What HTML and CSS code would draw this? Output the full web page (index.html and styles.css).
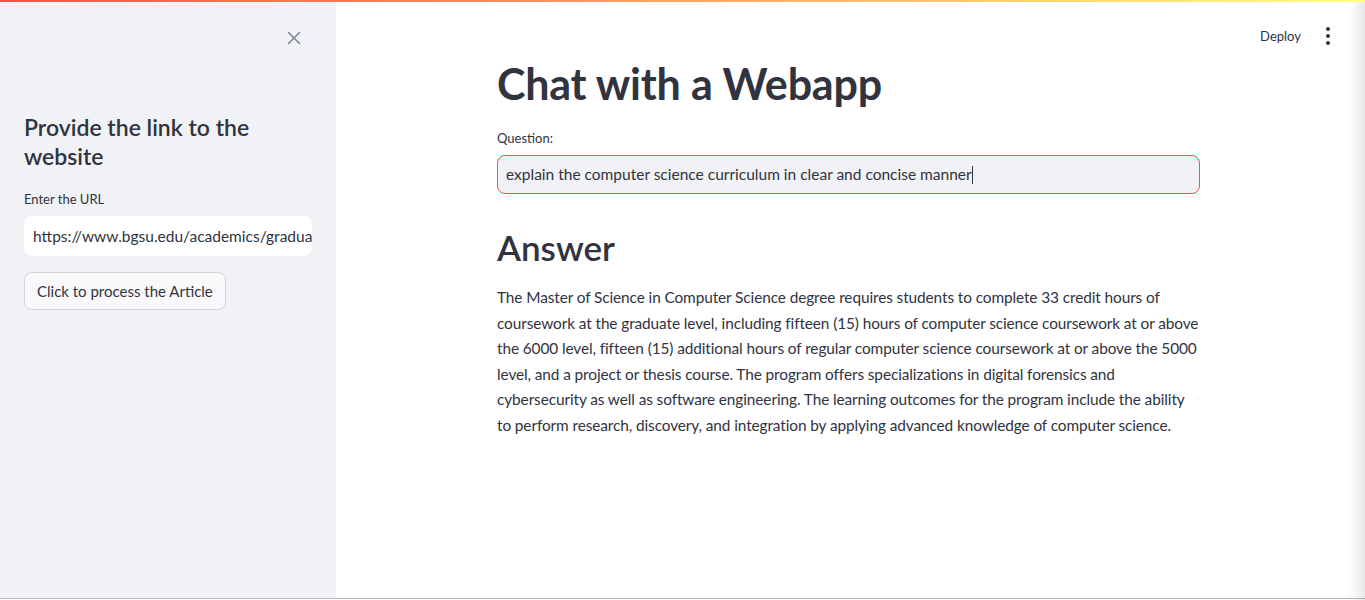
FILE: index.html
```html
<!DOCTYPE html>
<html lang="en">
<head>
<meta charset="utf-8">
<title>Chat with a Webapp</title>
<link rel="stylesheet" href="styles.css">
</head>
<body>
<div class="decoration"></div>
<div class="app">
  <aside class="sidebar">
    <div class="sidebar-top">
      <button class="close-btn" aria-label="Close sidebar">
        <svg width="14" height="14" viewBox="0 0 14 14"><path d="M1.5 1.5 L12.5 12.5 M12.5 1.5 L1.5 12.5" stroke="#808495" stroke-width="1.6" stroke-linecap="round"/></svg>
      </button>
    </div>
    <div class="sidebar-content">
      <h2 class="sidebar-title">Provide the link to the website</h2>
      <label class="field-label">Enter the URL</label>
      <div class="url-input">https://www.bgsu.edu/academics/graduate/computer-science.html</div>
      <button class="process-btn">Click to process the Article</button>
    </div>
  </aside>
  <main class="main">
    <header class="topbar">
      <span class="deploy">Deploy</span>
      <span class="kebab"><i></i><i></i><i></i></span>
    </header>
    <div class="block">
      <h1 class="title">Chat with a Webapp</h1>
      <label class="field-label">Question:</label>
      <div class="question-input"><span>explain the computer science curriculum in clear and concise manner</span><span class="caret"></span></div>
      <h2 class="answer-title">Answer</h2>
      <p class="answer">The Master of Science in Computer Science degree requires students to complete 33 credit hours of coursework at the graduate level, including fifteen (15) hours of computer science coursework at or above the 6000 level, fifteen (15) additional hours of regular computer science coursework at or above the 5000 level, and a project or thesis course. The program offers specializations in digital forensics and cybersecurity as well as software engineering. The learning outcomes for the program include the ability to perform research, discovery, and integration by applying advanced knowledge of computer science.</p>
    </div>
  </main>
</div>
<div class="edge-shade"></div>
</body>
</html>
```
FILE: styles.css
```css
* { box-sizing: border-box; }
html, body { margin: 0; padding: 0; height: 100%; }
body {
  font-family: Lato, "Noto Sans", sans-serif;
  color: #31333f;
  background: #fff;
  overflow: hidden;
}
.decoration {
  position: absolute;
  top: 0; left: 0; right: 0;
  height: 2px;
  background: linear-gradient(90deg, #ff4b4b, #fffd80);
  z-index: 5;
}
.edge-shade {
  position: absolute;
  top: 0; right: 0; bottom: 0;
  width: 16px;
  background: linear-gradient(90deg, rgba(0,0,0,0), rgba(0,0,0,0.09));
  pointer-events: none;
}
.app {
  display: flex;
  height: 599px;
  border-bottom: 1px solid #b5b7b8;
}
.sidebar {
  width: 336px;
  flex: none;
  background: #f0f2f6;
}
.sidebar-top {
  display: flex;
  justify-content: flex-end;
  padding: 28px 32px 0 0;
  height: 113px;
}
.close-btn {
  border: none;
  background: none;
  padding: 3px;
  width: 20px;
  height: 20px;
  display: flex;
  align-items: center;
  justify-content: center;
}
.sidebar-content {
  padding: 0 24px;
}
.sidebar-title {
  font-size: 23px;
  font-weight: 600;
  line-height: 29px;
  margin: 0 0 18px;
}
.field-label {
  display: block;
  font-size: 13px;
  line-height: 20px;
  margin-bottom: 7px;
}
.url-input {
  background: #fff;
  border-radius: 8px;
  height: 40px;
  padding: 0 9px;
  font-size: 15.5px;
  line-height: 40px;
  white-space: nowrap;
  overflow: hidden;
}
.process-btn {
  margin-top: 16px;
  height: 38px;
  padding: 0 12px;
  border: 1px solid #d3d4d8;
  border-radius: 8px;
  background: #f9f9fb;
  color: #31333f;
  font-family: inherit;
  font-size: 15px;
}
.main {
  flex: 1;
  display: flex;
  flex-direction: column;
}
.topbar {
  display: flex;
  justify-content: flex-end;
  align-items: center;
  gap: 25px;
  height: 72px;
  padding: 0 35px 0 0;
}
.deploy {
  font-size: 13px;
}
.kebab {
  display: flex;
  flex-direction: column;
  gap: 3px;
  width: 4px;
}
.kebab i {
  width: 4px;
  height: 4px;
  border-radius: 50%;
  background: #31333f;
}
.block {
  width: 703px;
  margin: -14px 0 0 161px;
}
.title {
  font-size: 43px;
  font-weight: 700;
  line-height: 52px;
  margin: 0 0 18px;
  letter-spacing: -0.2px;
}
.question-input {
  height: 39px;
  border: 1px solid #ff4b4b;
  border-radius: 8px;
  background: #f0f2f6;
  padding: 0 8px;
  font-size: 15.5px;
  line-height: 37px;
  display: flex;
  align-items: center;
}
.caret {
  display: inline-block;
  width: 1px;
  height: 18px;
  background: #31333f;
}
.answer-title {
  font-size: 35px;
  font-weight: 600;
  line-height: 44px;
  margin: 31px 0 16px;
}
.answer {
  font-size: 15.4px;
  line-height: 25.6px;
  margin: 0;
  letter-spacing: -0.1px;
}
```
